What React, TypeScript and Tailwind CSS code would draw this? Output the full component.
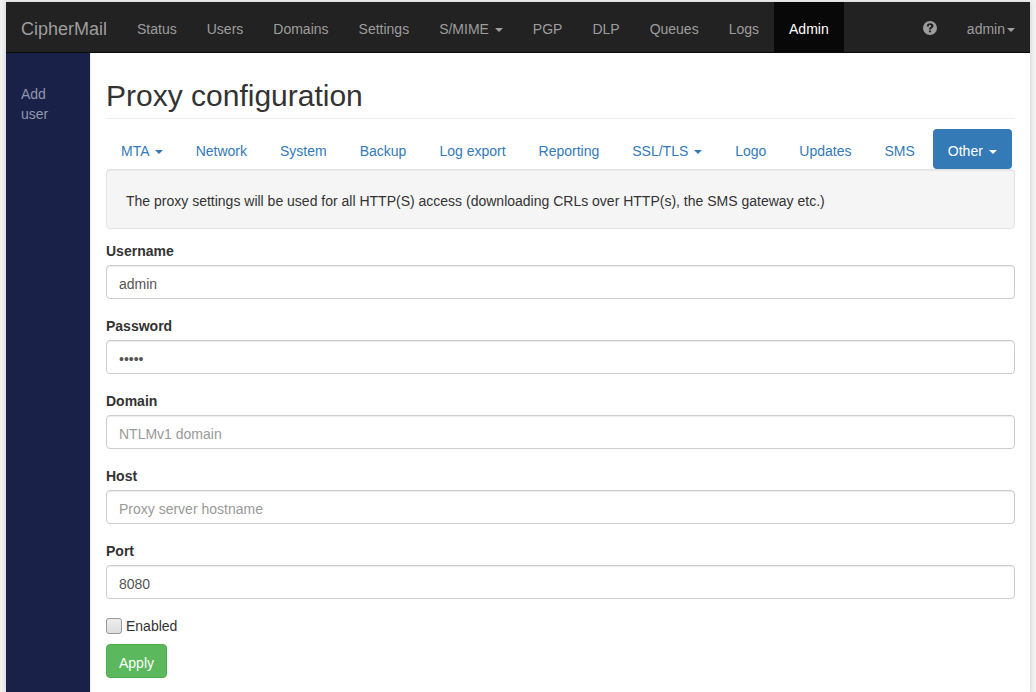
import React, { useState } from "react";
import clsx from "clsx";

interface NavItem {
  label: string;
  dropdown?: boolean;
  active?: boolean;
}

const mainNav: NavItem[] = [
  { label: "Status" },
  { label: "Users" },
  { label: "Domains" },
  { label: "Settings" },
  { label: "S/MIME", dropdown: true },
  { label: "PGP" },
  { label: "DLP" },
  { label: "Queues" },
  { label: "Logs" },
  { label: "Admin", active: true },
];

const adminTabs: NavItem[] = [
  { label: "MTA", dropdown: true },
  { label: "Network" },
  { label: "System" },
  { label: "Backup" },
  { label: "Log export" },
  { label: "Reporting" },
  { label: "SSL/TLS", dropdown: true },
  { label: "Logo" },
  { label: "Updates" },
  { label: "SMS" },
  { label: "Other", dropdown: true, active: true },
];

const fields = [
  { id: "username", label: "Username", type: "text", value: "admin" },
  { id: "password", label: "Password", type: "password", value: "admin" },
  { id: "domain", label: "Domain", type: "text", placeholder: "NTLMv1 domain" },
  { id: "host", label: "Host", type: "text", placeholder: "Proxy server hostname" },
  { id: "port", label: "Port", type: "text", value: "8080" },
];

function Caret() {
  return (
    <span className="ml-0.5 inline-block h-0 w-0 border-x-4 border-t-4 border-x-transparent border-t-current align-middle" />
  );
}

function HelpIcon() {
  return (
    <svg viewBox="0 0 14 14" className="h-3.5 w-3.5" fill="currentColor" fillRule="evenodd" aria-hidden="true">
      <path d="M7 0a7 7 0 1 1 0 14A7 7 0 0 1 7 0ZM5.9 9.4v1.9h2.2V9.4ZM3.7 5.4h2.1c0-.8.4-1.3 1.2-1.3.7 0 1.1.4 1.1.9 0 .6-.4.8-1 1.3-.8.6-1.2 1.1-1.2 2.3h2.1c0-.7.4-1 1-1.4.8-.6 1.5-1.2 1.5-2.4C10.500 3.200 9.100 2.300 7.100 2.300 5 2.300 3.700 3.500 3.700 5.400Z" />
    </svg>
  );
}

export default function App() {
  const [enabled, setEnabled] = useState(false);

  return (
    <div className="min-h-screen bg-[#f2f2f2] px-1.5 pt-0.5 font-['Liberation_Sans',Arial,sans-serif] text-sm text-[#333]">
      <div className="flex min-h-screen flex-col bg-white shadow-[0_0_5px_#ccc]">
        {/* Top bar */}
        <nav className="flex border-b border-[#080808] bg-[#222] text-[#9d9d9d]">
          <a href="#" className="px-[15px] pt-[17px] pb-[13px] text-lg leading-5">
            CipherMail
          </a>
          <ul className="flex">
            {mainNav.map((item) => (
              <li key={item.label}>
                <a
                  href="#"
                  className={clsx(
                    "block px-[15px] pt-[17px] pb-[13px] leading-5 whitespace-nowrap hover:text-white",
                    item.active && "bg-[#080808] text-white"
                  )}
                >
                  {item.label} {item.dropdown && <Caret />}
                </a>
              </li>
            ))}
          </ul>
          <ul className="ml-auto flex">
            <li>
              <a href="#" aria-label="Help" className="flex h-[50px] items-center px-[15px] pt-0.5 hover:text-white">
                <HelpIcon />
              </a>
            </li>
            <li>
              <a href="#" className="block px-[15px] pt-[17px] pb-[13px] leading-5 whitespace-nowrap hover:text-white">
                admin
                <Caret />
              </a>
            </li>
          </ul>
        </nav>

        <div className="flex flex-1">
          {/* Sidebar */}
          <aside className="w-[84px] shrink-0 bg-[#192149] px-[15px] pt-[31px] text-[#9197ad]">
            <a href="#" className="block leading-5 hover:text-white">
              Add user
            </a>
          </aside>

          <main className="min-w-0 flex-1 border-l border-[#eee] pr-[15px] pb-3 pl-[15px]">
            <h1 className="mb-2.5 border-b border-[#eee] pt-[26px] pb-1.5 text-3xl leading-[33px]">
              Proxy configuration
            </h1>

            <ul className="flex flex-wrap gap-x-[3px]">
              {adminTabs.map((tab) => (
                <li key={tab.label}>
                  <a
                    href="#"
                    className={clsx(
                      "block rounded px-[15px] pt-3 pb-2 leading-5 whitespace-nowrap",
                      tab.active ? "bg-[#337ab7] text-white" : "text-[#337ab7] hover:bg-[#eee]"
                    )}
                  >
                    {tab.label} {tab.dropdown && <Caret />}
                  </a>
                </li>
              ))}
            </ul>

            <div className="mb-3 rounded border border-[#e3e3e3] bg-[#f5f5f5] px-[19px] pt-[21px] pb-[17px] leading-5 shadow-[inset_0_1px_1px_rgba(0,0,0,0.05)]">
              The proxy settings will be used for all HTTP(S) access (downloading CRLs over HTTP(s), the SMS gateway etc.)
            </div>

            <form onSubmit={(e) => e.preventDefault()}>
              {fields.map((field) => (
                <div key={field.id} className="mb-[17px]">
                  <label htmlFor={field.id} className="mb-1 block leading-5 font-bold">
                    {field.label}
                  </label>
                  <input
                    id={field.id}
                    type={field.type}
                    defaultValue={field.value}
                    placeholder={field.placeholder}
                    className="block h-[34px] w-full rounded border border-[#ccc] bg-white px-3 pt-2 pb-1 text-[#555] shadow-[inset_0_1px_1px_rgba(0,0,0,0.075)] placeholder:text-[#999] focus:border-[#66afe9] focus:outline-none"
                  />
                </div>
              ))}

              <label className="mb-2 flex items-center gap-1 leading-5">
                <input
                  type="checkbox"
                  checked={enabled}
                  onChange={(e) => setEnabled(e.target.checked)}
                  className="h-4 w-4 appearance-none rounded-[3px] border border-[#999] bg-linear-to-b from-[#eee] to-[#ddd] checked:bg-[#337ab7] checked:from-[#337ab7] checked:to-[#337ab7]"
                />
                Enabled
              </label>

              <button
                type="submit"
                className="h-[34px] rounded border border-[#4cae4c] bg-[#5cb85c] px-3 pt-1 text-white hover:bg-[#449d44]"
              >
                Apply
              </button>
            </form>
          </main>
        </div>
      </div>
    </div>
  );
}
